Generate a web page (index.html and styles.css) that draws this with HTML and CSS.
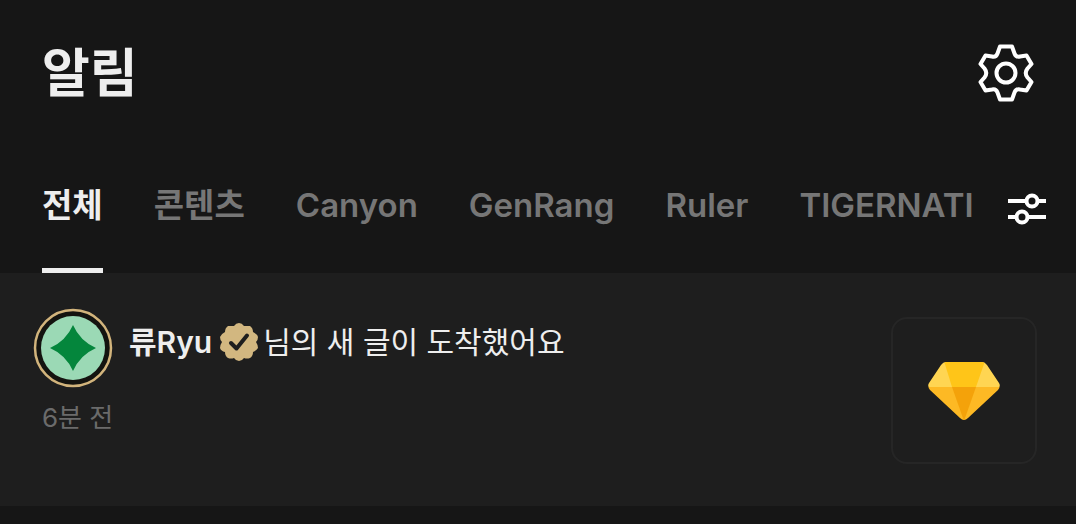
FILE: index.html
```html
<!DOCTYPE html>
<html lang="ko">
<head>
    <meta charset="UTF-8" />
    <meta name="viewport" content="width=device-width, initial-scale=1" />
    <title>알림</title>
    <link rel="stylesheet" href="styles.css">
</head>
<body>
    <header class="header">
        <h1>알림</h1>
        <button type="button" class="icon-button" aria-label="알림 설정">
            <svg class="gear" viewBox="0 0 56 58" aria-hidden="true">
                <path d="M22 2.500H34L36.500 9.500Q38 13.500 42 12.500L48.500 11.500L53.500 20L49.500 24.500Q46 29 49.500 33.500L53.500 38L48.500 46.500L42 45.500Q38 44.500 36.500 48.500L34 55.500H22L19.500 48.500Q18 44.500 14 45.500L7.500 46.500L2.500 38L6.500 33.500Q10 29 6.500 24.500L2.500 20L7.500 11.500L14 12.500Q18 13.500 19.500 9.500Z" />
                <circle cx="28" cy="29" r="9.500" />
            </svg>
        </button>
    </header>

    <div class="tab-bar">
        <nav class="tabs" aria-label="알림 분류">
            <a href="#" class="tab active" aria-current="page">전체</a>
            <a href="#" class="tab">콘텐츠</a>
            <a href="#" class="tab">Canyon</a>
            <a href="#" class="tab">GenRang</a>
            <a href="#" class="tab">Ruler</a>
            <a href="#" class="tab">TIGERNATI</a>
        </nav>
        <button type="button" class="icon-button" aria-label="필터">
            <svg class="sliders" viewBox="0 0 38 32" aria-hidden="true">
                <path d="M0 8H18M30 8H38M0 24H8M20 24H38" />
                <circle cx="24" cy="8" r="5.500" />
                <circle cx="14" cy="24" r="5.500" />
            </svg>
        </button>
    </div>

    <main>
        <article class="notification">
            <svg class="avatar" viewBox="0 0 80 80" aria-hidden="true">
                <circle cx="40" cy="40" r="38" fill="#141410" stroke="#d2b47c" stroke-width="2.500" />
                <circle cx="40" cy="40" r="32" fill="#9bd9b5" />
                <path d="M40 17Q47 33 63 40Q47 47 40 63Q33 47 17 40Q33 33 40 17Z" fill="#04863c" />
            </svg>
            <div class="content">
                <p class="message">
                    <strong>류Ryu</strong>
                    <svg class="badge" viewBox="0 0 40 40" role="img" aria-label="인증됨">
                        <path d="M20 1Q23 1 25 4Q28 4 31 4Q34 6 34 10Q38 12 39 15Q39 18 37 20Q39 23 39 26Q37 29 34 30Q34 34 31 36Q28 37 25 36Q23 39 20 39Q17 39 15 36Q12 37 9 36Q6 34 6 30Q2 29 1 26Q1 23 3 20Q1 18 1 15Q2 12 6 10Q6 6 9 4Q12 4 15 4Q17 1 20 1Z" fill="#d2b780" />
                        <path d="M12 21L17.500 26.500L28 13.500" fill="none" stroke="#1e1e1e" stroke-width="4" stroke-linecap="round" stroke-linejoin="round" />
                    </svg>
                    <span>님의 새 글이 도착했어요</span>
                </p>
            </div>
            <time class="time">6분 전</time>
            <div class="thumbnail">
                <svg class="gem" viewBox="0 0 74 60" aria-hidden="true">
                    <clipPath id="gem-shape">
                        <path d="M19 1H55Q58 1 60 4L72 22Q74 25 71 29L41 57Q37 61 33 57L3 29Q0 25 2 22L14 4Q16 1 19 1Z" />
                    </clipPath>
                    <g clip-path="url(#gem-shape)">
                        <path d="M0 0H74V26H0Z" fill="#ffd552" />
                        <path d="M17 0H58L49 26H25Z" fill="#ffc518" />
                        <path d="M0 26H74V60H0Z" fill="#fdb924" />
                        <path d="M25 26H49L37 60Z" fill="#f4a20a" />
                    </g>
                </svg>
            </div>
        </article>
    </main>
</body>
</html>
```
FILE: styles.css
```css
* {
    box-sizing: border-box;
}
body {
    margin: 0;
    font-family: Inter, 'Noto Sans CJK KR', sans-serif;
    background-color: #161616;
    color: #eee;
}
.header {
    display: flex;
    justify-content: space-between;
    align-items: center;
    height: 145px;
    padding: 0 42px;
}
h1 {
    margin: 0;
    padding-top: 2px;
    font-size: 52px;
    line-height: 72px;
    font-weight: 700;
}
.icon-button {
    display: flex;
    flex-shrink: 0;
    padding: 0;
    border: none;
    background: none;
    color: #fff;
    cursor: pointer;
}
.icon-button svg {
    fill: none;
    stroke: currentColor;
    stroke-width: 4;
}
.gear {
    width: 56px;
    height: 58px;
    stroke-linejoin: round;
}
.sliders {
    width: 38px;
    height: 32px;
}
.tab-bar {
    display: flex;
    align-items: center;
    gap: 28px;
    height: 128px;
    padding: 0 30px 0 42px;
}
.tabs {
    display: flex;
    flex: 1;
    align-self: stretch;
    gap: 51px;
    min-width: 0;
    overflow: hidden;
}
.tab {
    flex-shrink: 0;
    padding-top: 36px;
    border-bottom: 5px solid transparent;
    font-size: 33px;
    line-height: 48px;
    font-weight: 600;
    color: #767676;
    text-decoration: none;
    white-space: nowrap;
}
.tab.active {
    color: #eee;
    border-bottom-color: #eee;
}
.notification {
    display: grid;
    grid-template-columns: 80px 1fr 146px;
    grid-template-rows: 80px 1fr;
    column-gap: 16px;
    padding: 35px 39px 42px 33px;
    background-color: #1e1e1e;
}
.avatar {
    width: 80px;
    height: 80px;
}
.message {
    display: flex;
    align-items: center;
    margin: 0;
    font-size: 30px;
    line-height: 68px;
}
.message strong {
    font-weight: 600;
}
.badge {
    width: 40px;
    height: 40px;
    margin: 0 4px 0 7px;
}
.time {
    grid-column: 1 / 3;
    grid-row: 2;
    padding: 12px 9px;
    font-size: 26px;
    line-height: 36px;
    color: #6b6b6b;
}
.thumbnail {
    display: flex;
    grid-column: 3;
    grid-row: 1 / 3;
    align-items: center;
    justify-content: center;
    height: 147px;
    margin-top: 9px;
    border: 2px solid #262626;
    border-radius: 16px;
}
.gem {
    width: 74px;
    height: 60px;
}
```
